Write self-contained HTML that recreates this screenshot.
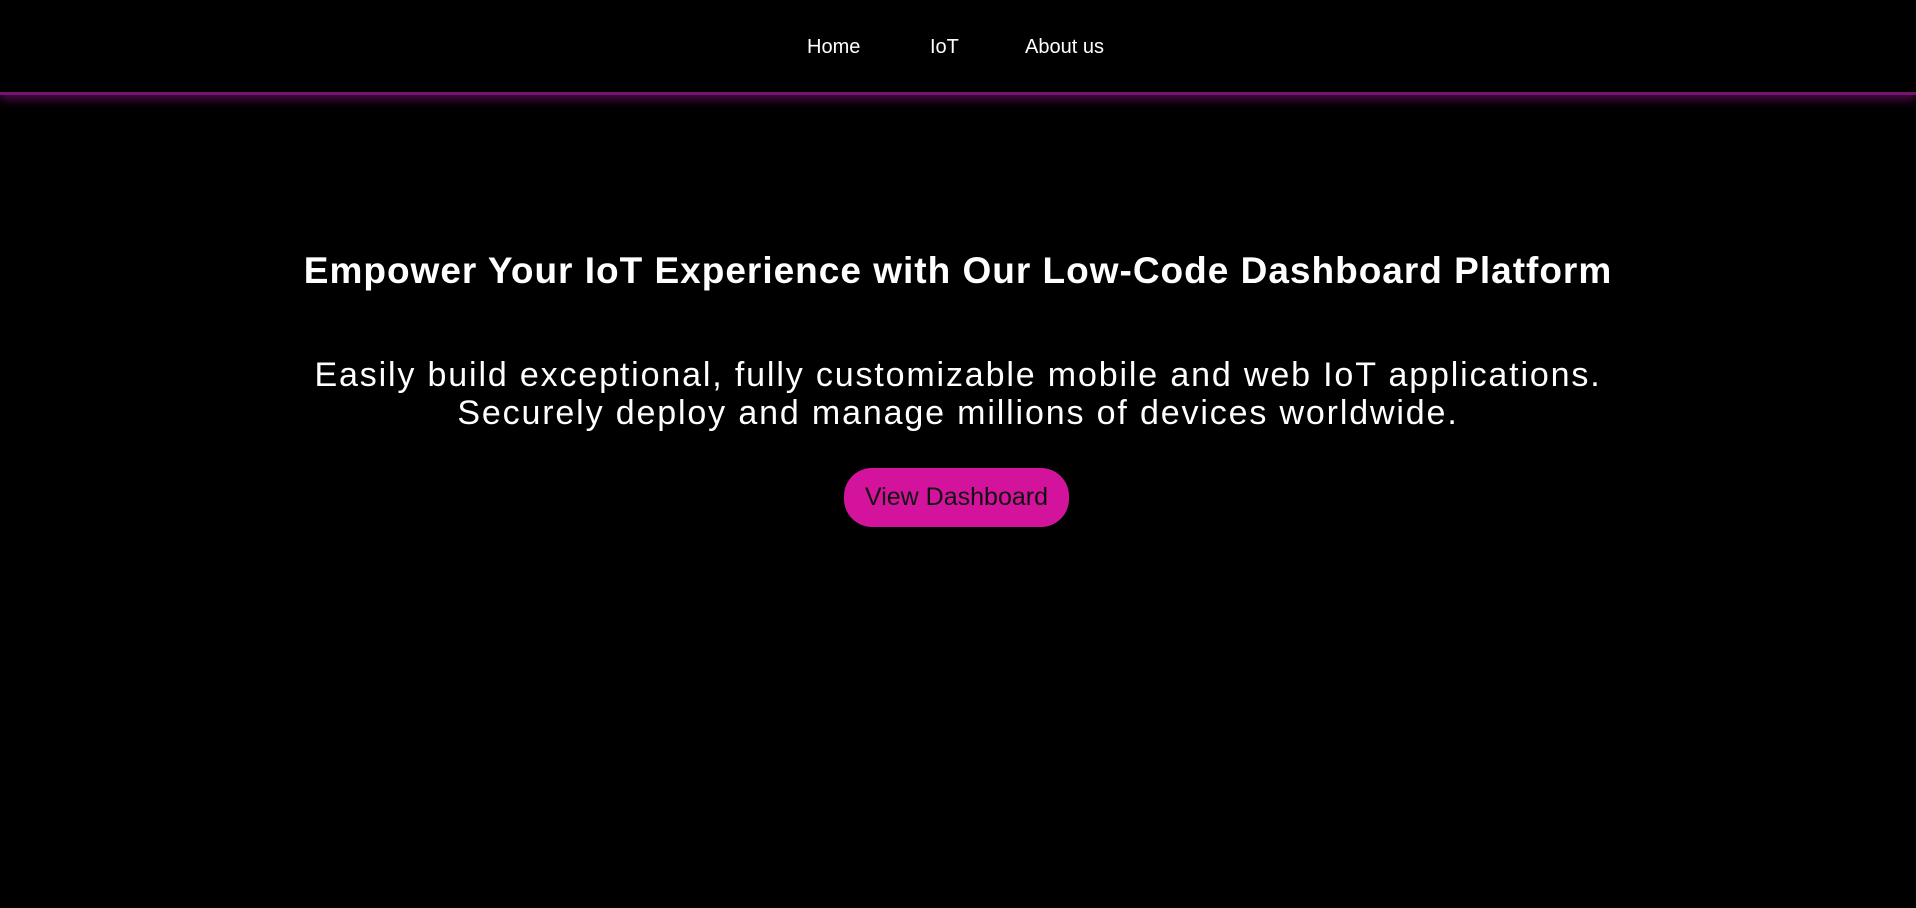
<!DOCTYPE html>
<html><head><meta charset="utf-8"><style>
html,body{margin:0;padding:0;background:#000;width:1916px;height:908px;overflow:hidden;font-family:"Liberation Sans",sans-serif;color:#fff}
.nav{position:absolute;top:0;left:0;width:1916px;height:92px;border-bottom:3px solid #741670;box-shadow:0 4px 10px rgba(120,15,110,.7)}
.nav a{position:absolute;top:36px;font-size:20px;color:#fff;text-decoration:none}
.c{position:absolute;left:0;width:1916px;text-align:center;white-space:nowrap}
.h{top:250px;font-size:37px;font-weight:bold;letter-spacing:1px}
.s{top:356px;font-size:34px;line-height:38px;letter-spacing:1.85px}
.btn{position:absolute;left:844px;top:468px;width:225px;height:59px;border-radius:28px;background:#d4139d;color:#111;font-size:25px;line-height:59px;text-align:center}
</style></head><body>
<div class="nav"><a style="left:807px">Home</a><a style="left:930px">IoT</a><a style="left:1025px">About us</a></div>
<div class="c h">Empower Your IoT Experience with Our Low-Code Dashboard Platform</div>
<div class="c s">Easily build exceptional, fully customizable mobile and web IoT applications.<br>Securely deploy and manage millions of devices worldwide.</div>
<div class="btn">View Dashboard</div>
</body></html>
